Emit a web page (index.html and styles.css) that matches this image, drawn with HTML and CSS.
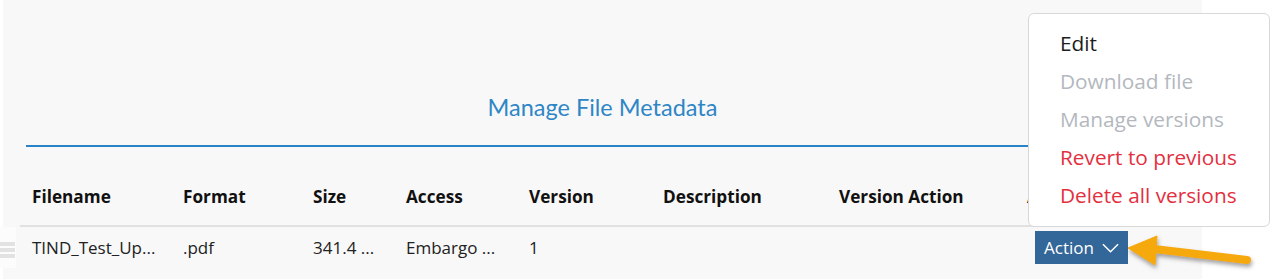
FILE: index.html
```html
<!DOCTYPE html>
<html lang="en">
<head>
<meta charset="utf-8">
<title>Manage File Metadata</title>
<link rel="stylesheet" href="styles.css">
</head>
<body>
<div class="page">
  <div class="handle" aria-hidden="true"><span></span><span></span><span></span></div>
  <section class="panel">
    <header class="panel-head">
      <h2 class="panel-title">Manage File Metadata</h2>
    </header>
    <div class="files">
      <div class="row row-head">
        <div class="cell">Filename</div>
        <div class="cell">Format</div>
        <div class="cell">Size</div>
        <div class="cell">Access</div>
        <div class="cell">Version</div>
        <div class="cell">Description</div>
        <div class="cell">Version Action</div>
        <div class="cell">Action</div>
      </div>
      <div class="row row-data">
        <div class="cell">TIND_Test_Up...</div>
        <div class="cell">.pdf</div>
        <div class="cell">341.4 ...</div>
        <div class="cell">Embargo ...</div>
        <div class="cell">1</div>
        <div class="cell"></div>
        <div class="cell"></div>
        <div class="cell">
          <button class="action-btn" type="button">Action
            <svg class="chev" viewBox="0 0 18 10" width="17" height="10"><path d="M1 1 L9 9 L17 1" fill="none" stroke="#fff" stroke-width="1.6"/></svg>
          </button>
        </div>
      </div>
    </div>
  </section>
  <ul class="menu">
    <li class="menu-item">Edit</li>
    <li class="menu-item is-disabled">Download file</li>
    <li class="menu-item is-disabled">Manage versions</li>
    <li class="menu-item is-danger">Revert to previous</li>
    <li class="menu-item is-danger">Delete all versions</li>
  </ul>
  <svg class="pointer" viewBox="0 0 150 52" width="150" height="52" aria-hidden="true">
    <defs>
      <filter id="sh" x="-20%" y="-40%" width="140%" height="200%">
        <feDropShadow dx="1" dy="3" stdDeviation="2" flood-color="#555" flood-opacity="0.55"/>
      </filter>
    </defs>
    <g filter="url(#sh)" fill="#f6a90f" stroke="#f6a90f">
      <line x1="36" y1="23" x2="129" y2="34" stroke-width="8" stroke-linecap="round"/>
      <polygon points="10,22 39,10 37,39" stroke-width="1" stroke-linejoin="round"/>
    </g>
  </svg>
</div>
</body>
</html>
```
FILE: styles.css
```css
html, body {
  margin: 0;
  padding: 0;
  background: #ffffff;
}

.page {
  position: relative;
  width: 1276px;
  height: 279px;
  overflow: hidden;
  font-family: "Open Sans", "Liberation Sans", sans-serif;
}

.panel {
  margin-left: 3px;
  width: 1199px;
  height: 279px;
  background: #f8f8f8;
}

.panel-head {
  margin: 0 23px;
  padding: 92px 0 23px;
  border-bottom: 2px solid #2a83c6;
}

.panel-title {
  margin: 0;
  font-family: Lato, "Open Sans", sans-serif;
  font-weight: 400;
  font-size: 23.5px;
  line-height: 30px;
  color: #2e86c6;
  text-align: center;
}

.files {
  margin-left: 17px;
}

.row {
  display: grid;
  grid-template-columns: 151px 130px 93px 123px 134px 176px 188px 1fr;
  align-items: center;
}

.cell {
  padding-left: 12px;
  white-space: nowrap;
}

.row-head {
  padding: 36px 0 14px;
  border-bottom: 2px solid #e1e1e1;
  font-weight: 700;
  font-size: 17.2px;
  line-height: 28px;
  color: #111111;
}

.row-data {
  height: 41px;
  font-size: 17px;
  line-height: 28px;
  color: #222222;
}

.action-btn {
  display: inline-flex;
  align-items: center;
  gap: 8px;
  height: 33px;
  margin-left: 8px;
  padding: 0 9px;
  border: 0;
  border-radius: 0;
  background: #336699;
  color: #ffffff;
  font-family: inherit;
  font-size: 17px;
}

.chev {
  display: block;
}

.handle {
  position: absolute;
  left: 0;
  top: 227px;
  width: 16px;
  height: 41px;
  padding-top: 15px;
  box-sizing: border-box;
  background: #fcfcfc;
  display: flex;
  flex-direction: column;
  gap: 2px;
}

.handle span {
  display: block;
  width: 15px;
  height: 4px;
  background: #e2e2e2;
}

.menu {
  position: absolute;
  left: 1028px;
  top: 13px;
  width: 242px;
  box-sizing: border-box;
  margin: 0;
  padding: 10px 0 12px 31px;
  list-style: none;
  background: #ffffff;
  border: 1px solid #d8d8d8;
  border-radius: 6px;
}

.menu-item {
  font-size: 20.8px;
  line-height: 38px;
  color: #1d1d1d;
  white-space: nowrap;
}

.menu-item.is-disabled {
  color: #b3b8be;
}

.menu-item.is-danger {
  color: #e3303f;
}

.pointer {
  position: absolute;
  left: 1118px;
  top: 226px;
}
```
